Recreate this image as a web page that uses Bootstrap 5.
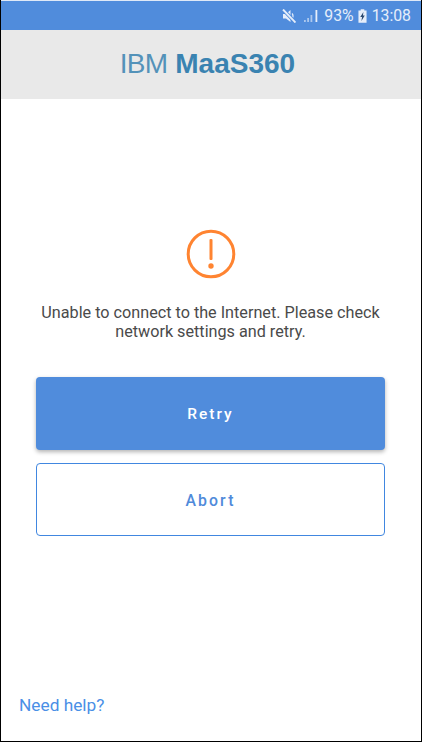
<!DOCTYPE html>
<html lang="en">
<head>
  <meta charset="UTF-8" />
  <title>MaaS360</title>
  <link href="https://cdn.jsdelivr.net/npm/bootstrap@5.3.3/dist/css/bootstrap.min.css" rel="stylesheet">
  <style>
    html,body{ height:100% }
    body{ background:#fff; font-family:Roboto,sans-serif; color:#444 }
    .screen{ height:742px; border:1px solid #000; border-top:0 }
    .status-bar{ height:30px; background:#508cdc; border-top:1px solid #dfe9f7; color:#e6eefa; font-size:15.8px; padding-right:10px; line-height:1 }
    .status-batt{ margin-right:1px }
    .status-signal{ margin-left:4px; margin-right:2px }
    .brand-bar{ height:69px; background:#e9e9e9; color:#3a83b1; font-family:"Liberation Sans",sans-serif; font-size:28px; line-height:1; padding:0 7px 2px 0 }
    .brand-light{ font-weight:400; margin-right:8px; letter-spacing:-.8px; opacity:.85 }
    .msg-area{ padding:130px 36px 0 35px }
    .msg-text{ font-size:16.2px; line-height:19px; margin:24px -4px 0; color:#4a4a4a }
    .msg-btn{ height:73px; padding-top:8px; font-size:15.5px; font-weight:500; letter-spacing:2px; border-radius:4px }
    .msg-btn.primary-btn{ background:#508cdc; border:0; color:#fff; box-shadow:0 2px 4px rgba(0,0,0,.3); margin-top:36px }
    .msg-btn.outline-btn{ background:#fff; border:1px solid #4187e0; color:#4f8ada; font-size:15.8px; letter-spacing:2.1px; margin-top:13px }
    .help-link{ color:#4a8fe6; font-size:17.3px; text-decoration:none; padding:0 0 22px 18px }
  </style>
</head>
<body>
<div class="screen d-flex flex-column overflow-hidden">
  <div class="status-bar d-flex align-items-center justify-content-end gap-1">
    <svg width="14" height="14" viewBox="0 0 14 14" fill="#e6eefa">
      <path d="M1 5h3l4.500-4v12L4 9.500H1z"/><path d="M10 4.500c1.300 1 1.300 4 0 5" fill="none" stroke="#e6eefa" stroke-width="1.300"/><path d="M1 .5 13.500 13.500" stroke="#508cdc" stroke-width="3.600"/><path d="M1 .5 13.500 13.500" stroke="#e6eefa" stroke-width="1.900"/>
    </svg>
    <svg class="status-signal" width="14" height="14" viewBox="0 0 14 14" fill="#e6eefa">
      <rect x="0" y="11" width="1.800" height="2" opacity=".6"/><rect x="3.200" y="9" width="1.800" height="4" opacity=".6"/><rect x="6.500" y="6" width="1.800" height="7" opacity=".6"/><rect x="11.500" y="1" width="1.800" height="12"/>
    </svg>
    <span>93%</span>
    <svg class="status-batt" width="9" height="14" viewBox="0 0 10 15">
      <path d="M3 0h4v1.500h2.500V15H.5V1.500H3z" fill="#e6eefa"/><path d="M6 3 2.500 8.500h2L3.800 13 7.500 7h-2z" fill="#2c4a70"/>
    </svg>
    <span>13:08</span>
  </div>
  <div class="brand-bar d-flex align-items-center justify-content-center">
    <span class="brand-light">IBM</span><b>MaaS360</b>
  </div>
  <div class="msg-area flex-grow-1 d-flex flex-column">
    <svg class="align-self-center" width="50" height="50" viewBox="0 0 50 50" fill="none">
      <circle cx="25" cy="25" r="22.800" stroke="#ff8431" stroke-width="3"/>
      <rect x="23.500" y="10" width="3" height="21" rx="1" fill="#ff8431"/>
      <circle cx="25" cy="37" r="2.700" fill="#ff8431"/>
    </svg>
    <p class="msg-text text-center">Unable to connect to the Internet. Please check network settings and retry.</p>
    <button class="btn msg-btn primary-btn w-100">Retry</button>
    <button class="btn msg-btn outline-btn w-100">Abort</button>
  </div>
  <a href="#" class="help-link">Need help?</a>
</div>
<script src="https://cdn.jsdelivr.net/npm/bootstrap@5.3.3/dist/js/bootstrap.bundle.min.js"></script>
</body>
</html>
